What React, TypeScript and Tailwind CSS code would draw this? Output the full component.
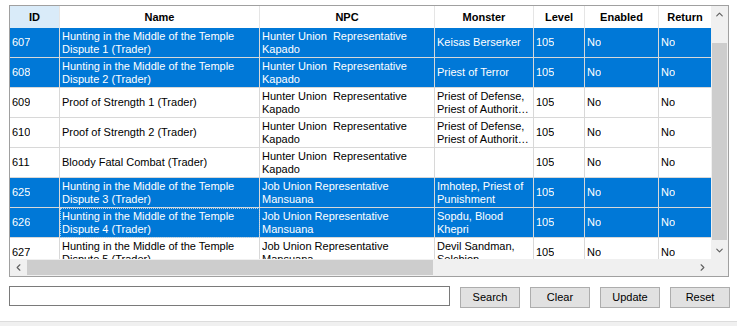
import { ChevronUp, ChevronDown, ChevronLeft, ChevronRight } from "lucide-react";

type Quest = {
  id: string;
  name: string;
  npc: string;
  monster: string;
  level: string;
  enabled: string;
  ret: string;
  selected?: boolean;
  focused?: boolean;
};

const columns = [
  { key: "id", label: "ID", width: "w-[50px]" },
  { key: "name", label: "Name", width: "w-[200px]" },
  { key: "npc", label: "NPC", width: "w-[175px]" },
  { key: "monster", label: "Monster", width: "w-[99px]" },
  { key: "level", label: "Level", width: "w-[51px]" },
  { key: "enabled", label: "Enabled", width: "w-[74px]" },
  { key: "ret", label: "Return", width: "w-[53px]" },
] as const;

const quests: Quest[] = [
  { id: "607", name: "Hunting in the Middle of the Temple Dispute 1 (Trader)", npc: "Hunter Union  Representative Kapado", monster: "Keisas Berserker", level: "105", enabled: "No", ret: "No", selected: true },
  { id: "608", name: "Hunting in the Middle of the Temple Dispute 2 (Trader)", npc: "Hunter Union  Representative Kapado", monster: "Priest of Terror", level: "105", enabled: "No", ret: "No", selected: true },
  { id: "609", name: "Proof of Strength 1 (Trader)", npc: "Hunter Union  Representative Kapado", monster: "Priest of Defense, Priest of Authority, Guardian", level: "105", enabled: "No", ret: "No" },
  { id: "610", name: "Proof of Strength 2 (Trader)", npc: "Hunter Union  Representative Kapado", monster: "Priest of Defense, Priest of Authority, Guardian", level: "105", enabled: "No", ret: "No" },
  { id: "611", name: "Bloody Fatal Combat (Trader)", npc: "Hunter Union  Representative Kapado", monster: "", level: "105", enabled: "No", ret: "No" },
  { id: "625", name: "Hunting in the Middle of the Temple Dispute 3 (Trader)", npc: "Job Union Representative Mansuana", monster: "Imhotep, Priest of Punishment", level: "105", enabled: "No", ret: "No", selected: true },
  { id: "626", name: "Hunting in the Middle of the Temple Dispute 4 (Trader)", npc: "Job Union Representative Mansuana", monster: "Sopdu, Blood Khepri", level: "105", enabled: "No", ret: "No", selected: true, focused: true },
  { id: "627", name: "Hunting in the Middle of the Temple Dispute 5 (Trader)", npc: "Job Union Representative Mansuana", monster: "Devil Sandman, Selchion", level: "105", enabled: "No", ret: "No" },
];

function App() {
  return (
    <div className="w-full h-[326px] bg-white flex flex-col font-['Liberation_Sans',Arial,sans-serif] text-[11px] text-black overflow-hidden">
      {/* Grid */}
      <div className="mt-[5px] ml-[9px] w-[720px] h-[272px] border border-[#a0a0a0] flex flex-col">
        <div className="flex h-[253px]">
          <div className="w-[701px] h-[253px] overflow-hidden">
            {/* Header */}
            <div className="flex h-[22px] bg-white">
              {columns.map((c) => (
                <div
                  key={c.key}
                  className={`${c.width} shrink-0 h-full flex items-center justify-center font-bold border-r border-[#e5e5e5] ${c.key === "id" ? "bg-[#d9ebf9]" : ""}`}
                >
                  {c.label}
                </div>
              ))}
            </div>
            {/* Rows */}
            {quests.map((q) => (
              <div key={q.id} className={`flex h-[30px] ${q.selected ? "bg-[#0078d7] text-white" : "bg-white"}`}>
                {columns.map((c) => (
                  <div
                    key={c.key}
                    className={`${c.width} shrink-0 h-full flex items-center px-[2px] border-r border-b border-[#d8d8d8] ${q.focused && c.key === "name" ? "outline-1 outline-dotted outline-[#a8d0f0] -outline-offset-1" : ""}`}
                  >
                    <span className="line-clamp-2 leading-[13px] whitespace-pre-wrap">{q[c.key]}</span>
                  </div>
                ))}
              </div>
            ))}
          </div>
          {/* Vertical scrollbar */}
          <div className="w-[17px] h-full bg-[#f0f0f0] flex flex-col">
            <div className="h-[17px] flex items-center justify-center text-[#606060]">
              <ChevronUp size={11} strokeWidth={2.5} />
            </div>
            <div className="flex-1 pt-[20px] pb-[2px] flex flex-col">
              <div className="mx-[1px] flex-1 bg-[#cdcdcd]" />
            </div>
            <div className="h-[17px] flex items-center justify-center text-[#606060]">
              <ChevronDown size={11} strokeWidth={2.5} />
            </div>
          </div>
        </div>
        {/* Horizontal scrollbar */}
        <div className="flex h-[17px]">
          <div className="w-[701px] h-full bg-[#f0f0f0] flex">
            <div className="w-[17px] h-full flex items-center justify-center text-[#606060]">
              <ChevronLeft size={11} strokeWidth={2.5} />
            </div>
            <div className="flex-1 py-[1px] flex">
              <div className="w-[406px] h-full bg-[#cdcdcd]" />
            </div>
            <div className="w-[17px] h-full flex items-center justify-center text-[#606060]">
              <ChevronRight size={11} strokeWidth={2.5} />
            </div>
          </div>
          <div className="w-[17px] h-full bg-[#f0f0f0]" />
        </div>
      </div>

      {/* Search bar */}
      <div className="flex items-start mt-[9px] ml-[9px]">
        <input type="text" className="w-[441px] h-[20px] border border-[#7a7a7a] bg-white outline-none px-1 text-[11px]" />
        <div className="flex gap-[10px] ml-[10px] mt-px">
          {["Search", "Clear", "Update", "Reset"].map((b) => (
            <button key={b} className="w-[60px] h-[21px] bg-[#e1e1e1] border border-[#adadad] text-[11px] flex items-center justify-center">
              {b}
            </button>
          ))}
        </div>
      </div>

      {/* Status strip */}
      <div className="mt-auto h-[5px] bg-[#f0f0f0] border-t border-[#dcdcdc]" />
    </div>
  );
}

export default App;
